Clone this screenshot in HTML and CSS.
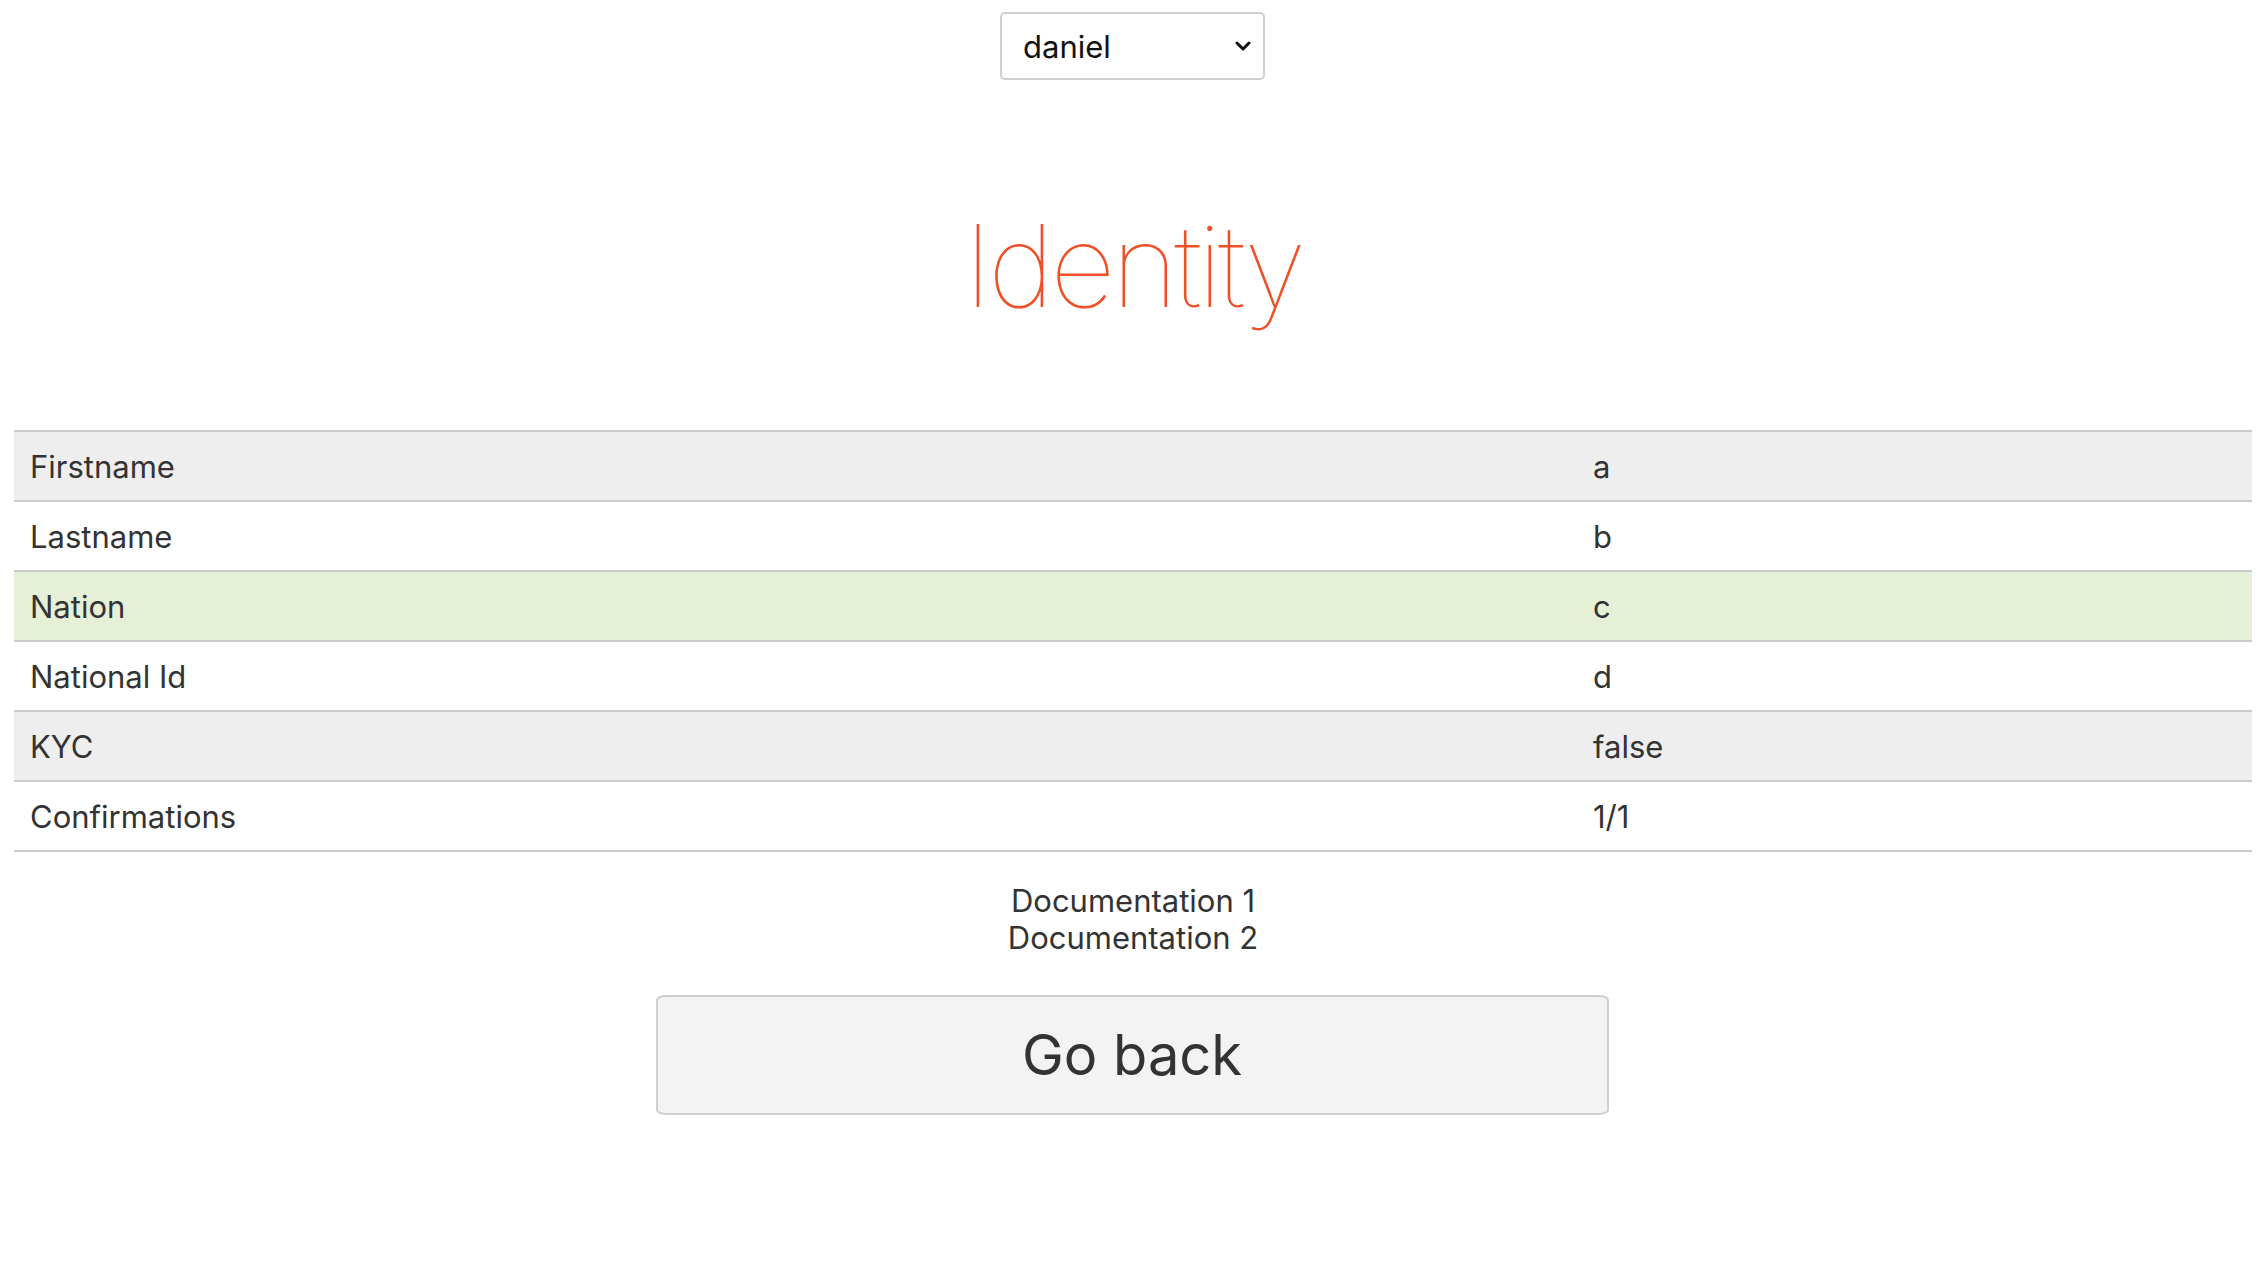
FILE: index.html
```html
<!DOCTYPE html>
<html lang="en">
<head>
<meta charset="utf-8">
<title>Identity</title>
<link rel="stylesheet" href="styles.css">
</head>
<body>
<div class="page">
  <div class="picker">
    <div class="select-wrap">
      <select class="user-select">
        <option>daniel</option>
      </select>
      <svg class="chevron" width="16" height="10" viewBox="0 0 16 10"><path d="M2 2 L8 8 L14 2" fill="none" stroke="#111" stroke-width="3" stroke-linecap="round" stroke-linejoin="round"/></svg>
    </div>
  </div>
  <h1 class="title">Identity</h1>
  <table class="identity">
    <tbody>
      <tr class="row-gray"><td class="label">Firstname</td><td class="value">a</td></tr>
      <tr><td class="label">Lastname</td><td class="value">b</td></tr>
      <tr class="row-green"><td class="label">Nation</td><td class="value">c</td></tr>
      <tr><td class="label">National Id</td><td class="value">d</td></tr>
      <tr class="row-gray"><td class="label">KYC</td><td class="value">false</td></tr>
      <tr class="last"><td class="label">Confirmations</td><td class="value">1/1</td></tr>
    </tbody>
  </table>
  <div class="docs">
    <div>Documentation 1</div>
    <div>Documentation 2</div>
  </div>
  <div class="actions">
    <button class="back-btn">Go back</button>
  </div>
</div>
</body>
</html>
```
FILE: styles.css
```css
html, body {
  margin: 0;
  padding: 0;
  background: #fff;
}
body {
  font-family: Inter, "Liberation Sans", sans-serif;
  color: #333;
}
.page {
  padding: 12px 12px 0 14px;
}
.picker {
  display: flex;
  justify-content: center;
}
.select-wrap {
  position: relative;
  width: 265px;
  height: 68px;
  margin-left: -1px;
}
.user-select {
  appearance: none;
  -webkit-appearance: none;
  width: 100%;
  height: 100%;
  box-sizing: border-box;
  border: 2px solid #cfcfcf;
  border-radius: 5px;
  background: #fff;
  font-family: Inter, "Liberation Sans", sans-serif;
  font-size: 31px;
  color: #111;
  padding: 0 0 0 21px;
}
.chevron {
  position: absolute;
  right: 14px;
  top: 29px;
  pointer-events: none;
}
.title {
  margin: 126px 0 104px;
  text-align: center;
  font-family: Inter, Roboto, Lato, sans-serif;
  font-weight: 100;
  font-size: 114px;
  line-height: 120px;
  color: #ef5027;
  letter-spacing: -4px;
}
.identity {
  width: 100%;
  border-collapse: separate;
  border-spacing: 0;
  font-size: 31px;
}
.identity td {
  height: 68px;
  padding: 0 16px;
  border-top: 2px solid #cccccc;
  vertical-align: middle;
  color: #333;
}
.identity tr.last td {
  border-bottom: 2px solid #cccccc;
}
.identity .label {
  width: 1531px;
}
.row-gray td {
  background: #eeeeee;
}
.row-green td {
  background: #e6f0d7;
}
.docs {
  margin-top: 30px;
  text-align: center;
  font-size: 31px;
  line-height: 37px;
  color: #333;
}
.actions {
  display: flex;
  justify-content: center;
  margin-top: 39px;
}
.back-btn {
  width: 953px;
  height: 120px;
  box-sizing: border-box;
  border: 2px solid #cfcfcf;
  border-radius: 10px / 5px;
  background: #f3f3f3;
  font-family: Inter, "Liberation Sans", sans-serif;
  font-size: 56px;
  color: #333;
  margin-left: -2px;
}
```
